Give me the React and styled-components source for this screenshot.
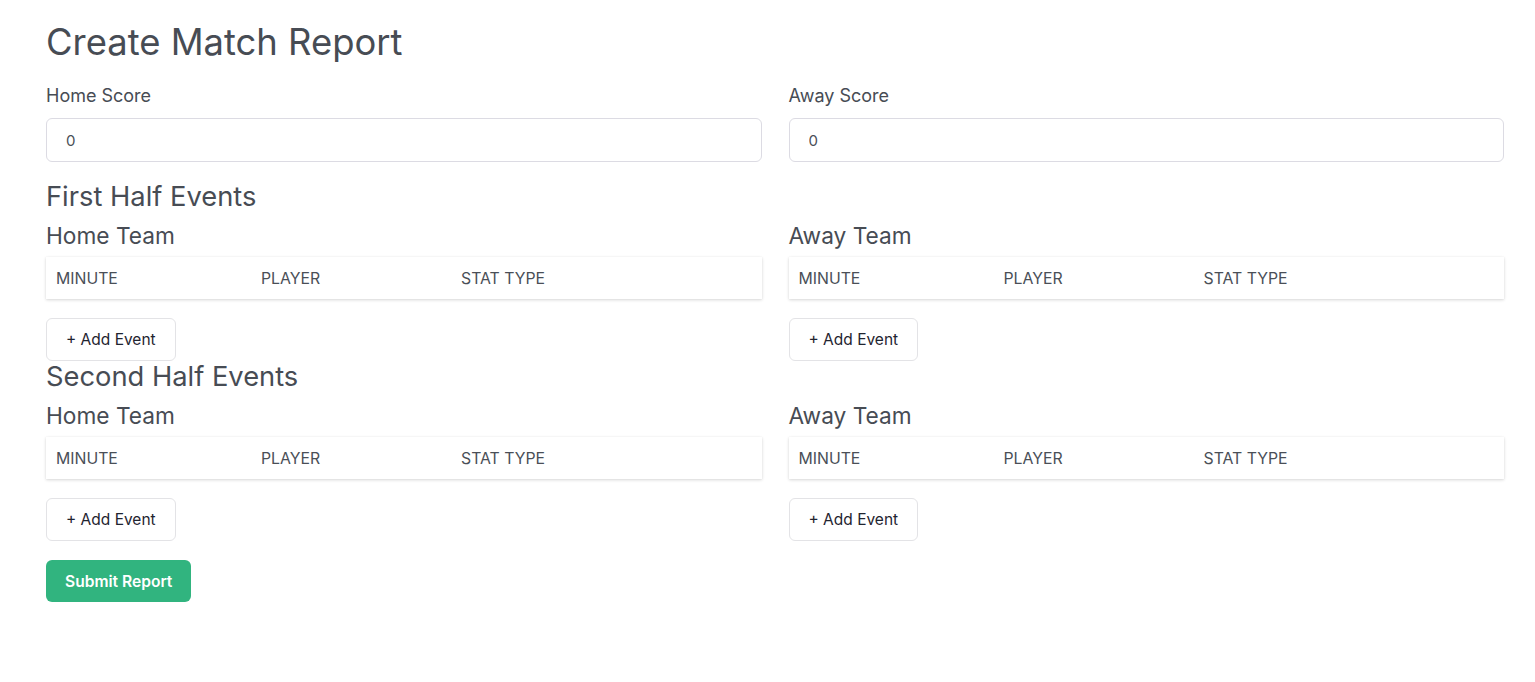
import React from "react";
import styled, { createGlobalStyle } from "styled-components";

const Global = createGlobalStyle`
  html, body { margin: 0; padding: 0; background: #fff; }
  body { font-family: Inter, "Noto Sans", sans-serif; color: #4a4f57; }
  * { box-sizing: border-box; }
`;

const Page = styled.div`
  padding: 18px 31px 40px 46px;
`;

const Title = styled.h1`
  margin: 0 0 16px;
  font-size: 36.4px;
  font-weight: 400;
  line-height: 48px;
  color: #474c54;
`;

const Grid = styled.div`
  display: grid;
  grid-template-columns: 1fr 1fr;
  column-gap: 27px;
`;

const Field = styled.div`
  display: flex;
  flex-direction: column;
`;

const Label = styled.label`
  font-size: 18px;
  line-height: 26px;
  margin: 1px 0 9px;
  color: #474c54;
`;

const Input = styled.input`
  height: 44px;
  border: 1px solid #dcdbe3;
  border-radius: 6px;
  padding: 0 19px;
  font-family: inherit;
  font-size: 15px;
  color: #4a4f57;
  outline: none;
`;

const SectionTitle = styled.h2`
  margin: 0;
  font-size: 27.3px;
  font-weight: 400;
  line-height: 32px;
  color: #474c54;
`;

const TeamTitle = styled.h3`
  margin: 8px 0 6px;
  font-size: 22.7px;
  font-weight: 400;
  line-height: 30px;
  color: #474c54;
`;

const Table = styled.div`
  display: grid;
  grid-template-columns: 205px 200px 1fr;
  height: 42px;
  align-items: center;
  background: #fff;
  box-shadow: 0 1px 3px rgba(0, 0, 0, 0.16), 0 0 1px rgba(0, 0, 0, 0.05);
`;

const Th = styled.div`
  padding-left: 10px;
  font-size: 15.8px;
  text-transform: uppercase;
  color: #4a4f57;
`;

const AddButton = styled.button`
  margin-top: 19px;
  align-self: flex-start;
  height: 43px;
  padding: 0 19px;
  background: #fff;
  border: 1px solid #e3e3e6;
  border-radius: 6px;
  font-family: inherit;
  font-size: 15.5px;
  color: #1f2430;
  cursor: pointer;
`;

const Team = styled.div`
  display: flex;
  flex-direction: column;
`;

const Submit = styled.button`
  margin-top: 19px;
  height: 42px;
  padding: 0 19px;
  background: #31b47f;
  border: none;
  border-radius: 6px;
  font-family: inherit;
  font-weight: 600;
  font-size: 15.6px;
  color: #fff;
  cursor: pointer;
`;

const ScoreGrid = styled(Grid)`
  margin-bottom: 19px;
`;

const Half = ({ title }) => (
  <>
    <SectionTitle>{title}</SectionTitle>
    <Grid>
      {["Home Team", "Away Team"].map((t) => (
        <Team key={t}>
          <TeamTitle>{t}</TeamTitle>
          <Table>
            <Th>Minute</Th>
            <Th>Player</Th>
            <Th>Stat Type</Th>
          </Table>
          <AddButton>+ Add Event</AddButton>
        </Team>
      ))}
    </Grid>
  </>
);

export default function App() {
  return (
    <Page>
      <Global />
      <Title>Create Match Report</Title>
      <ScoreGrid>
        <Field>
          <Label>Home Score</Label>
          <Input defaultValue="0" />
        </Field>
        <Field>
          <Label>Away Score</Label>
          <Input defaultValue="0" />
        </Field>
      </ScoreGrid>
      <Half title="First Half Events" />
      <Half title="Second Half Events" />
      <Submit>Submit Report</Submit>
    </Page>
  );
}
